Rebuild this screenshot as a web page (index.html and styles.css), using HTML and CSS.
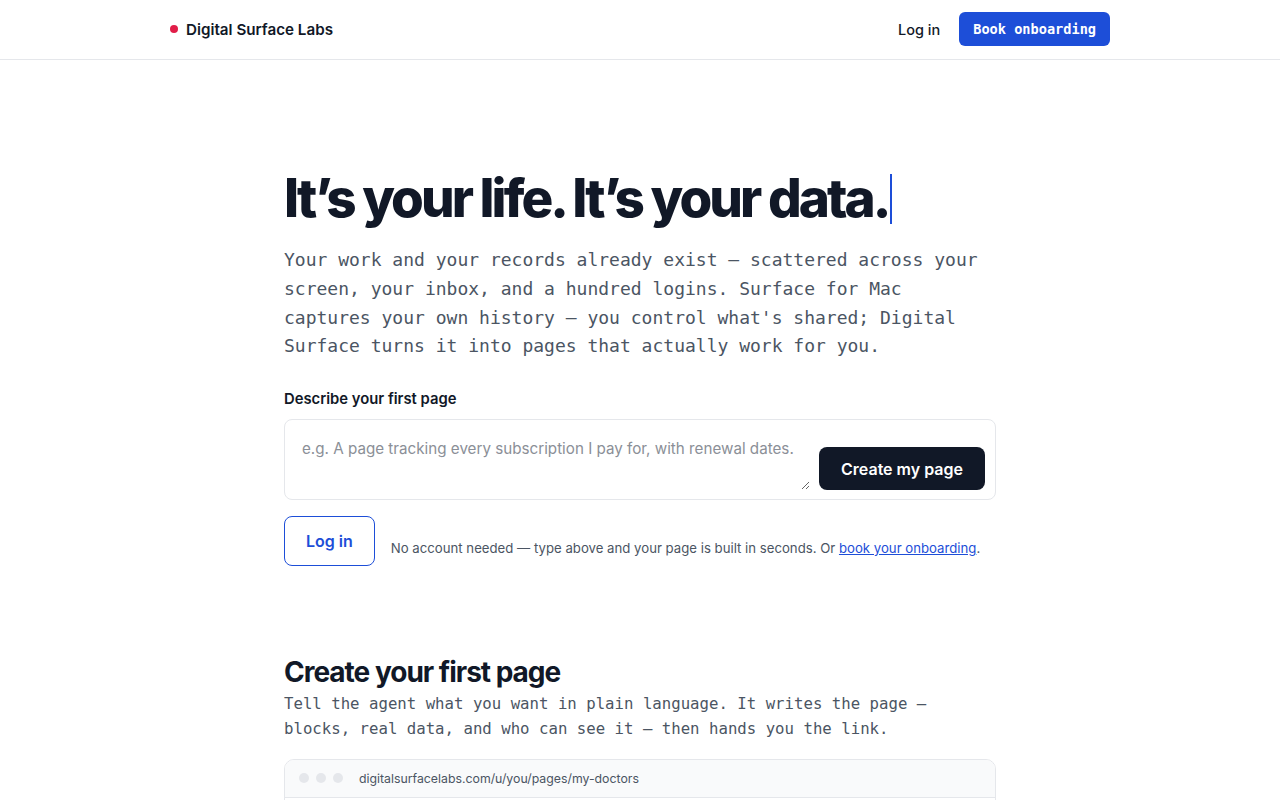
FILE: index.html
```
<!DOCTYPE html>
<html lang="en">
<head>
    <meta charset="UTF-8">
    <meta name="viewport" content="width=device-width, initial-scale=1.0">
    <title>Digital Surface Labs</title>
    <link rel="stylesheet" href="styles.css">
</head>
<body>
    <!-- Top bar -->
    <header class="topbar">
        <div class="topbar-inner">
            <a class="brand" href="#"><span class="brand-dot"></span>Digital Surface Labs</a>
            <nav class="topnav">
                <a class="nav-link" href="#">Log in</a>
                <a class="nav-cta" href="#">Book onboarding</a>
            </nav>
        </div>
    </header>

    <main class="page">
        <!-- Hero -->
        <section class="hero">
            <h1 class="hero-title">It’s your life. It’s your data.<span class="caret"></span></h1>
            <p class="hero-lede">Your work and your records already exist — scattered across your screen, your inbox, and a hundred logins. Surface for Mac captures your own history — you control what's shared; Digital Surface turns it into pages that actually work for you.</p>

            <form class="prompt-form">
                <label class="prompt-label" for="prompt">Describe your first page</label>
                <div class="prompt-box">
                    <textarea id="prompt" class="prompt-input" placeholder="e.g. A page tracking every subscription I pay for, with renewal dates."></textarea>
                    <button type="button" class="prompt-submit">Create my page</button>
                </div>
                <div class="prompt-foot">
                    <a class="btn-outline" href="#">Log in</a>
                    <p class="prompt-note">No account needed — type above and your page is built in seconds. Or <a href="#">book your onboarding</a>.</p>
                </div>
            </form>
        </section>

        <!-- How it works -->
        <section class="feature">
            <h2 class="feature-title">Create your first page</h2>
            <p class="feature-text">Tell the agent what you want in plain language. It writes the page — blocks, real data, and who can see it — then hands you the link.</p>

            <div class="browser">
                <div class="browser-bar">
                    <span class="browser-dots"><i></i><i></i><i></i></span>
                    <span class="browser-url">digitalsurfacelabs.com/u/you/pages/my-doctors</span>
                </div>
                <div class="browser-body"></div>
            </div>
        </section>
    </main>
</body>
</html>
```

FILE: styles.css
```
/* General styling */
body {
    margin: 0;
    background: #fff;
    color: #111827;
    font-family: Inter, 'Noto Sans', sans-serif;
}
a {
    color: inherit;
    text-decoration: none;
}

/* Top bar */
.topbar {
    border-bottom: 1px solid #e5e7eb;
}
.topbar-inner {
    max-width: 940px;
    margin: 0 auto;
    height: 58px;
    padding-bottom: 1px;
    display: flex;
    align-items: center;
    justify-content: space-between;
}
.brand {
    display: flex;
    align-items: center;
    gap: 8px;
    font-size: 15.2px;
    font-weight: 600;
    color: #111827;
}
.brand-dot {
    width: 8px;
    height: 8px;
    border-radius: 50%;
    background: #e11d48;
}
.topnav {
    display: flex;
    align-items: center;
    gap: 19px;
}
.nav-link {
    font-size: 14.5px;
    font-weight: 500;
}
.nav-cta {
    background: #1d4ed8;
    color: #fff;
    font-family: 'DejaVu Sans Mono', monospace;
    font-weight: 700;
    font-size: 13.6px;
    padding: 0 14px;
    height: 34px;
    line-height: 34px;
    border-radius: 6px;
}

/* Page */
.page {
    max-width: 712px;
    margin: 0 auto;
}
.hero {
    padding-top: 108px;
}
.hero-title {
    margin: 0;
    font-size: 53px;
    font-weight: 800;
    letter-spacing: -0.056em;
    line-height: 1.15;
    color: #111827;
}
.caret {
    display: inline-block;
    width: 2px;
    height: 50px;
    background: #1d4ed8;
    margin-left: 2px;
    vertical-align: -7px;
}
.hero-lede {
    margin: 17px 0 0;
    font-family: 'DejaVu Sans Mono', monospace;
    font-size: 18px;
    line-height: 1.6;
    color: #4b5563;
}

/* Prompt form */
.prompt-form {
    margin-top: 29px;
}
.prompt-label {
    display: block;
    font-size: 14.8px;
    font-weight: 600;
    margin-bottom: 11px;
}
.prompt-box {
    display: flex;
    align-items: flex-end;
    gap: 9px;
    padding: 8px 10px 9px 8px;
    border: 1px solid #e5e7eb;
    border-radius: 8px;
}
.prompt-input {
    flex: 1;
    height: 62px;
    box-sizing: border-box;
    padding: 10px 9px;
    border: none;
    outline: none;
    resize: vertical;
    font-family: Inter, sans-serif;
    font-size: 15.2px;
    line-height: 1.4;
    color: #111827;
}
.prompt-input::placeholder {
    color: #8b8f97;
}
.prompt-submit {
    height: 43px;
    padding: 0 22px;
    border: none;
    border-radius: 8px;
    background: #111827;
    color: #fff;
    font-family: Inter, sans-serif;
    font-size: 16px;
    font-weight: 600;
    cursor: pointer;
}
.prompt-foot {
    display: flex;
    align-items: center;
    gap: 16px;
    margin-top: 16px;
}
.btn-outline {
    flex-shrink: 0;
    white-space: nowrap;
    padding: 0 21px;
    height: 48px;
    line-height: 48px;
    border: 1px solid #1d4ed8;
    border-radius: 8px;
    color: #1d4ed8;
    font-size: 16px;
    font-weight: 600;
}
.prompt-note {
    margin: 14px 0 0;
    font-size: 13.2px;
    white-space: nowrap;
    color: #4b5563;
}
.prompt-note a {
    color: #1d4ed8;
    text-decoration: underline;
}

/* Feature section */
.feature {
    padding-top: 90px;
}
.feature-title {
    margin: 0;
    font-size: 28px;
    font-weight: 700;
    letter-spacing: -0.036em;
    line-height: 1.2;
}
.feature-text {
    margin: 1px 0 0;
    font-family: 'DejaVu Sans Mono', monospace;
    font-size: 15.7px;
    line-height: 1.6;
    color: #4b5563;
}
.browser {
    margin-top: 18px;
    border: 1px solid #e5e7eb;
    border-radius: 10px;
    overflow: hidden;
}
.browser-bar {
    display: flex;
    align-items: center;
    gap: 16px;
    height: 37px;
    padding: 0 14px;
    background: #f9fafb;
    border-bottom: 1px solid #e5e7eb;
}
.browser-dots {
    display: flex;
    gap: 7px;
}
.browser-dots i {
    width: 10px;
    height: 10px;
    border-radius: 50%;
    background: #e5e7eb;
}
.browser-url {
    font-size: 12.3px;
    color: #4b5563;
}
.browser-body {
    height: 220px;
}
```
